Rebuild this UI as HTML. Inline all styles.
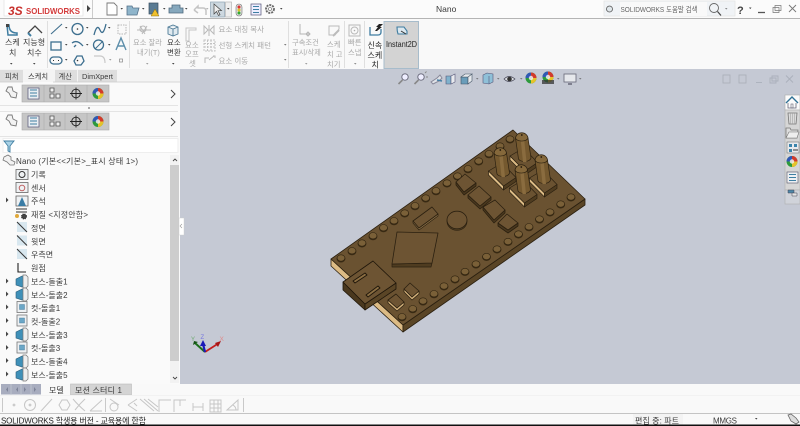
<!DOCTYPE html>
<html><head><meta charset="utf-8"><title>Nano</title>
<style>
html,body{margin:0;padding:0;width:800px;height:426px;overflow:hidden;background:#f9f9f9}
svg{display:block;position:absolute;left:0;top:0;filter:blur(.35px)}
text{font-family:"Liberation Sans","Noto Sans CJK KR",sans-serif;font-size:8px;fill:#3a3a3a}
.g text,text.g{fill:#a9a9a9}
.d{fill:none;stroke:#b9b9b9;stroke-width:1}
.b{fill:none;stroke:#3d6f8f;stroke-width:1.3}
.i{fill:none;stroke:#4a6a80;stroke-width:1}
</style></head><body>
<svg width="800" height="426" viewBox="0 0 800 426" xmlns="http://www.w3.org/2000/svg">
<defs>
<g id="pad"><ellipse cx="0" cy="0.8" rx="4.4" ry="3.7" fill="#3a2b14"/><ellipse cx="0" cy="0" rx="3.9" ry="3.2" fill="#7a6038" stroke="#2f2310" stroke-width=".6"/></g>
<g id="sw">
<path d="M-13.500,-4 L1.500,11 L1.500,15 L-13.500,0 Z" fill="#dcbb85" stroke="#2b2010" stroke-width=".7"/>
<path d="M1.500,11 L14,2.500 L14,6.500 L1.500,15 Z" fill="#4f3c20" stroke="#2b2010" stroke-width=".7"/>
<path d="M-13.500,-4 L0,-12 L14,2.500 L1.500,11 Z" fill="#6a5231" stroke="#2b2010" stroke-width=".7"/>
<path d="M-8,-22 L-5,-1 A6.500,4 0 0 0 7.500,-2 L4.500,-22 Z" fill="#75592f" stroke="#2b2010" stroke-width=".7"/>
<path d="M-3,-22 L-.5,2 L3,2 L.5,-22 Z" fill="#8a6c3f"/>
<path d="M-8,-22 A6.300,6 0 0 1 4.500,-22 A6.300,3.500 0 0 1 -8,-22 Z" fill="#85683b" stroke="#2b2010" stroke-width=".7"/>
<circle cx="-1.700" cy="-25" r=".9" fill="#1f160a"/>
</g>
<g id="ref"><rect x="-6" y="-5" width="12" height="10" fill="#eef1f3" stroke="#666" stroke-width=".8"/></g>
<g id="boss"><path d="M-6,-2 L0,-5 L3,-5 L3,5 L0,6 L-6,4 Z" fill="#3f90b8" stroke="#2c5d78" stroke-width=".6"/><path d="M1,-6 h3 l2,2 v9 l-2,2 h-3 Z" fill="#eeeeee" stroke="#777" stroke-width=".7"/></g>
<g id="cut"><rect x="-5" y="-6" width="10" height="11" fill="#eef1f3" stroke="#777" stroke-width=".8"/><rect x="-2.500" y="-3" width="5" height="5" fill="#6ba7c7" stroke="#3d6f8f" stroke-width=".4"/></g>
<g id="pl"><rect x="-5" y="-5" width="10" height="10" fill="#c9deea" opacity=".7"/><path d="M-5,-5 L5,5" stroke="#333" stroke-width="1"/></g>
<path id="ar" d="M0,-2.500 L2.500,0 L0,2.500 Z" fill="#444"/>
<path id="dt" d="M0,0 h2.500 L1.250,1.600 Z" fill="#444"/>
<g id="ball"><circle r="5.500" fill="#2d9a3c"/><path d="M-5.500,0 A5.500,5.500 0 0 1 0,-5.500 L0,0 Z" fill="#3158b5"/><path d="M0,-5.500 A5.500,5.500 0 0 1 5.500,0 L0,0 Z" fill="#d33a2c"/><path d="M5.500,0 A5.500,5.500 0 0 1 0,5.500 L0,0 Z" fill="#e5c32a"/><circle r="2.200" fill="#eee" opacity=".85"/></g>
<g id="iconrow">
<rect x="22" y="0" width="87" height="17" fill="#c6c6c6" stroke="#aaa" stroke-width=".6"/>
<path d="M44,0 V17 M65,0 V17 M87,0 V17" stroke="#aeaeae" stroke-width=".7"/>
<path d="M8,2 L12,2 L13,6 L17,8 L16,13 L11,12 L9,8 L6,6 Z" fill="#f2f2f2" stroke="#777" stroke-width=".9"/>
<rect x="28" y="3" width="11" height="11" fill="#e9eef2" stroke="#557" stroke-width=".7"/>
<path d="M30,5 H37 M30,8 H37 M30,11 H37" stroke="#3e7fa3" stroke-width="1"/>
<path d="M50,3 h4 v4 h-4 Z M56,9 h4 v4 h-4 Z M50,9 h4 v4 h-4 Z" fill="#eee" stroke="#555" stroke-width=".8"/>
<circle cx="76" cy="8.500" r="4.300" fill="none" stroke="#222" stroke-width=".9"/><path d="M70,8.500 H82 M76,2.500 V14.500" stroke="#222" stroke-width=".9"/>
<use href="#ball" x="98" y="8.500"/>
<path d="M171,5 L175,9 L171,13" fill="none" stroke="#444" stroke-width="1"/>
</g>
</defs>

<rect width="800" height="426" fill="#f9f9f9"/>
<!-- top bar -->
<rect x="0" y="0" width="800" height="18" fill="#fbfbfb"/>
<rect x="0" y="18" width="800" height="1" fill="#b4b4b4"/>
<rect x="4" y="-1" width="79" height="17" fill="#fff" stroke="#ddd" stroke-width=".6"/>
<text x="26" y="14" textLength="54" lengthAdjust="spacingAndGlyphs" style="font-size:8.500px;font-weight:700;fill:#d33b3b">SOLIDWORKS</text>
<text x="8" y="15" style="font-size:12px;font-weight:700;font-style:italic;fill:#c8322e">3S</text>
<path d="M87,5 L90.500,8.500 L87,12 Z" fill="#444"/>
<path d="M92.500,0 V18" stroke="#ccc"/>
<!-- quick bar -->
<path d="M107,3 h7 l3,3 v9 h-10 Z" fill="#fff" stroke="#777" stroke-width=".9"/><use href="#dt" x="120.500" y="8"/>
<path d="M127,6 h5 l1,2 h6 l-2,7 h-10 Z" fill="#8fb5cb" stroke="#55718a" stroke-width=".8"/><use href="#dt" x="142" y="8"/>
<rect x="149" y="3" width="9" height="11" fill="#5a7b93" stroke="#3a4f60" stroke-width=".7"/><path d="M155,9 l4,7 h-8 Z" fill="#f0c02c" stroke="#8a6f10" stroke-width=".5"/><use href="#dt" x="163" y="8"/>
<path d="M172,5 h8 v3 h3 v5 h-14 v-5 h3 Z" fill="#86a8bd" stroke="#4f6a7e" stroke-width=".8"/><use href="#dt" x="185" y="8"/>
<path d="M194,10 l4,-4 v2 h5 q3,0 3,3 v4 M194,10 l4,3" fill="none" stroke="#c4c4c4" stroke-width="1.500"/><use href="#dt" x="206" y="8" opacity=".4"/>
<rect x="210.500" y="2" width="14" height="15" fill="#cdd8e0" stroke="#8fa4b4" stroke-width=".7"/>
<path d="M214,4 v10 l2.500,-2.500 l2,4 l1.500,-.8 l-2,-4 h3.500 Z" fill="#eee" stroke="#444" stroke-width=".7"/>
<rect x="225.500" y="2" width="6" height="15" fill="#eee" stroke="#aaa" stroke-width=".6"/><use href="#dt" x="227" y="8"/>
<rect x="236" y="4" width="6" height="12" rx="3" fill="#ddd" stroke="#777" stroke-width=".6"/><circle cx="239" cy="7" r="1.500" fill="#d33"/><circle cx="239" cy="10" r="1.500" fill="#d9c22a"/><circle cx="239" cy="13" r="1.500" fill="#3a3"/>
<rect x="251" y="4" width="10" height="11" fill="#eef" stroke="#557" stroke-width=".7"/><path d="M253,6.500 h6 M253,9.500 h6 M253,12.500 h6" stroke="#3e7fa3"/>
<circle cx="270" cy="9" r="4" fill="#eee" stroke="#666" stroke-width="1.800" stroke-dasharray="2 1"/><circle cx="270" cy="9" r="1.500" fill="#fff" stroke="#666" stroke-width=".6"/><use href="#dt" x="280" y="8"/>
<text x="436" y="12" style="font-size:8.500px">Nano</text>
<!-- search -->
<rect x="604" y="1" width="131" height="15" fill="#f0f3f6" stroke="#e3e3e3" stroke-width=".7"/>
<rect x="620" y="2" width="87" height="14" fill="#f9f9f9"/>
<circle cx="609.500" cy="9" r="3" fill="#dfe6ea" stroke="#555" stroke-width=".8"/>
<text x="620.500" y="12" textLength="77" lengthAdjust="spacingAndGlyphs" style="font-size:7.500px;fill:#666">SOLIDWORKS 도움말 검색</text>
<circle cx="714" cy="8" r="4.500" fill="none" stroke="#666" stroke-width=".9"/><path d="M717.500,11.500 L721,15.500" stroke="#444" stroke-width="1.200"/><use href="#dt" x="725" y="8" opacity=".6"/>
<text x="737" y="14" style="font-size:11px;font-weight:700;fill:#444">?</text><use href="#dt" x="749" y="7.500"/>
<path d="M758,12.500 h7" stroke="#555" stroke-width="1.300"/>
<path d="M775,5.500 h6 v5 h-6 Z M773,7.500 h6 v5 h-6 Z" fill="#f9f9f9" stroke="#777" stroke-width=".7"/>
<path d="M789,5 l7,7 M796,5 l-7,7" stroke="#777" stroke-width=".9"/>

<!-- ribbon -->
<rect x="0" y="19" width="800" height="50" fill="#f9f9f9"/>
<path d="M47.500,21 V68 M129.500,21 V68 M288.500,21 V68 M344.500,21 V68 M364.500,21 V68" stroke="#dfdfdf"/>
<path d="M7,25 h2 q0,8 8,8 v2 h-9 Z" fill="none" stroke="#3f7da1" stroke-width="1.500"/><rect x="6" y="24" width="3" height="3" fill="#444"/>
<text x="5" y="45">스케</text><text x="9" y="55.500">치</text><use href="#dt" x="10" y="63"/>
<path d="M28,33 l7,-7 l7,7" fill="none" stroke="#444" stroke-width="1.300"/><path d="M28,33 l3,3" stroke="#3f7da1" stroke-width="2"/>
<text x="23" y="45">지능형</text><text x="27" y="55.500">치수</text><use href="#dt" x="33" y="63"/>
<!-- sketch tools -->
<path d="M51,34 L62,24" stroke="#3f6f8e" stroke-width="1.100"/><use href="#dt" x="65" y="27"/>
<rect x="51" y="42" width="10" height="8" class="b"/><use href="#dt" x="65" y="44"/>
<rect x="50" y="57" width="12" height="7" rx="3.500" class="b"/><path d="M53,60.500h1M58,60.500h1" stroke="#333"/><use href="#dt" x="65" y="59"/>
<circle cx="77.500" cy="29" r="5.500" class="b"/><circle cx="77.500" cy="29" r=".8" fill="#333"/><use href="#dt" x="86" y="27"/>
<path d="M72,43 q5,-4 11,3 M74,47 l2,-2" class="b"/><use href="#dt" x="86" y="44"/>
<path d="M74,61 l3,-5 h5 l2,5 l-3,4 h-5 Z" class="b"/><circle cx="77.500" cy="60.500" r=".8" fill="#333"/>
<path d="M94,35 q3,-12 6,-5 t6,-6" class="b"/><use href="#dt" x="108" y="27"/>
<circle cx="98.500" cy="45" r="5" class="b"/><path d="M95,49 L103,41" stroke="#3d6f8f"/><use href="#dt" x="108" y="44"/>
<path d="M94,56 h6 q5,0 5,7" fill="none" stroke="#c9c9c9" stroke-width="1.200"/><use href="#dt" x="109" y="59" opacity=".5"/>
<rect x="118" y="25" width="8" height="9" fill="none" stroke="#b6b6b6" stroke-dasharray="1.500 1"/>
<path d="M116,50 l5,-12 l5,12 M118,46 h6" fill="none" stroke="#5e8fab" stroke-width="1.400"/>
<rect x="119.500" y="59" width="3" height="3" fill="none" stroke="#888" stroke-width=".7"/>
<!-- group 2 -->
<path d="M140,26 l5,8 M147,26 l-5,8 M137,30 h14" class="d" stroke-width="1.300"/><circle cx="143" cy="29" r="3" class="d"/>
<g class="g"><text x="133" y="45" style="font-size:7.300px">요소 잘라</text><text x="137" y="55" style="font-size:7.300px">내기(T)</text></g>
<use href="#dt" x="146" y="63" opacity=".5"/>
<path d="M168,27 l5,-2 l5,2 v7 l-5,2 l-5,-2 Z M173,29 v7 M168,27 l5,2 l5,-2" fill="#dfe9ef" stroke="#4d7a96" stroke-width=".9"/>
<text x="167" y="45" style="font-size:7.500px">요소</text><text x="167" y="55" style="font-size:7.500px">변환</text><use href="#dt" x="172" y="63"/>
<path d="M186,28 h10 v2 h-7 v11 h-3 Z" fill="none" stroke="#c5c5c5"/>
<g class="g"><text x="185" y="47.500" style="font-size:7.500px">요소</text><text x="185" y="56.500" style="font-size:7.500px">오프</text><text x="189" y="66" style="font-size:7.500px">셋</text></g>
<path d="M204,26 l4,4 l-4,4 Z M214,26 l-4,4 l4,4 Z M209,25 v11" class="d"/>
<path d="M204,40 h11 v11 h-11 Z M204,43.500 h11 M204,47 h11 M207.500,40 v11 M211,40 v11" fill="none" stroke="#c2c2c2" stroke-dasharray="2 1"/>
<path d="M205,63 v-5 h4 M209,60 l5,-4 M213,56 h2 v2" class="d"/>
<g class="g"><text x="218.500" y="32" style="font-size:7.500px">요소 대칭 복사</text><text x="218.500" y="48" style="font-size:7.500px">선형 스케치 패턴</text><text x="218.500" y="63.500" style="font-size:7.500px">요소 이동</text></g>
<use href="#dt" x="284" y="44" opacity=".7"/><use href="#dt" x="284" y="59" opacity=".7"/>
<!-- group 3 -->
<path d="M300,24 V34 H310 M306,34 l2,-2 l2,2 l-2,2 Z" fill="none" stroke="#b5b5b5"/>
<g class="g"><text x="292" y="45" style="font-size:7.300px">구속조건</text><text x="292" y="55" style="font-size:7.300px">표시/삭제</text></g><use href="#dt" x="305" y="63" opacity=".5"/>
<path d="M329,26 h10 v3 l-4,6 h-6 Z" fill="none" stroke="#bbb"/><path d="M333,36 l6,-6" stroke="#bbb" stroke-width="2"/>
<g class="g"><text x="327" y="47" style="font-size:7.300px">스케</text><text x="327" y="57" style="font-size:7.300px">치 고</text><text x="327" y="67" style="font-size:7.300px">치기</text></g>
<rect x="349" y="25" width="11" height="11" class="d"/><circle cx="354.500" cy="30.500" r="3.500" class="d"/><circle cx="354.500" cy="30.500" r=".8" fill="#aaa"/>
<g class="g"><text x="348" y="45" style="font-size:7.300px">빠른</text><text x="348" y="55" style="font-size:7.300px">스냅</text></g><use href="#dt" x="354" y="63" opacity=".6"/>
<!-- rapid sketch -->
<path d="M370,27 v8 h8 q3,0 3,-3 v-3" fill="none" stroke="#3f7da1" stroke-width="1.300"/><path d="M375,31 l3,-4 h-2 l3,-3 h4 l-3,3 h2 l-5,4 Z" fill="#222"/>
<text x="367.500" y="48" style="fill:#222">신속</text><text x="367.500" y="58" style="fill:#222">스케</text><text x="371.500" y="67.500" style="fill:#222">치</text>
<rect x="384" y="21.500" width="34.500" height="47" fill="#d3d3d3" stroke="#a7bccb"/>
<path d="M397,27 h7 l3,4 v3 h-9 q-1,-3 -1,-7 Z" fill="#dce8ef" stroke="#3f7da1" stroke-width="1.100"/><path d="M401,31 l5,3" stroke="#333"/>
<text x="386" y="47" textLength="31" lengthAdjust="spacingAndGlyphs" style="font-size:7.800px;fill:#222">Instant2D</text>

<!-- viewport -->
<rect x="180" y="69" width="620" height="315" fill="#c5c9d4"/>
<!-- heads up toolbar -->
<g fill="none" stroke="#667" stroke-width=".9">
<circle cx="405" cy="77" r="3.200" fill="#eef"/><path d="M402.500,80 l-4,4" stroke="#888" stroke-width="1.600"/>
<circle cx="421" cy="77" r="3.200" fill="#eef"/><path d="M418.500,80 l-4,4" stroke="#888" stroke-width="1.600"/><path d="M425,73 l1.500,-1.500 M426,77 h2" stroke="#888"/>
</g>
<path d="M431,82 l6,-4 l3,-3 l2,3 l-3,3 l-6,3 Z" fill="#dfe3e8" stroke="#889"/><path d="M437,80 l5,1" stroke="#467fa5" stroke-width="1.500"/>
<path d="M446,76 h5 v8 h-5 Z" fill="#7fb2cd" stroke="#557" stroke-width=".6"/><path d="M451,76 l4,-2 v8 l-4,2 Z" fill="#e8eaee" stroke="#557" stroke-width=".6"/>
<path d="M461,77 h7 v7 h-7 Z" fill="#6a9dba" stroke="#456" stroke-width=".6"/><path d="M461,77 l4,-3 h7 l-4,3 Z M468,77 l4,-3 v7 l-4,3 Z" fill="#e6e9ec" stroke="#456" stroke-width=".6"/><use href="#dt" x="476" y="78" opacity=".6"/>
<path d="M483,75 l4,-2 l6,1 v8 l-4,2 l-6,-1 Z" fill="#8fc0d8" stroke="#557" stroke-width=".6"/><path d="M489,76 v8" stroke="#557" stroke-width=".6"/><use href="#dt" x="497" y="78" opacity=".6"/>
<path d="M504,79 q5,-5 11,0 q-6,5 -11,0 Z" fill="#dadde2" stroke="#445" stroke-width=".7"/><circle cx="509.500" cy="79" r="2.300" fill="#333"/><use href="#dt" x="520" y="78" opacity=".6"/>
<use href="#ball" x="531" y="78"/><use href="#ball" x="548" y="77"/>
<path d="M542,80 h12 v4 h-12 Z" fill="#333" opacity=".75"/><use href="#dt" x="557" y="78" opacity=".6"/>
<rect x="564" y="74" width="12" height="8" fill="#e6e8ec" stroke="#667" stroke-width=".8"/><path d="M568,84 h4" stroke="#667" stroke-width="1.500"/><use href="#dt" x="579" y="78" opacity=".6"/>
<!-- viewport window controls -->
<g fill="none" stroke="#abb0bb" stroke-width=".9">
<rect x="723" y="75" width="7" height="8"/><rect x="739" y="75" width="7" height="8"/>
<path d="M756,82.500 h6"/><path d="M772,76 h6 v5 h-6 Z M770,78 h6 v5 h-6 Z"/><path d="M786,75.500 l7,7 M793,75.500 l-7,7"/>
</g>
<!-- right tabs -->
<rect x="785" y="95" width="15" height="15" fill="#fbfbfb" stroke="#aaa" stroke-width=".6"/>
<rect x="785" y="110" width="15" height="80" fill="#d6d6d6" stroke="#b0b0b0" stroke-width=".6"/>
<rect x="785" y="190" width="15" height="14" fill="#d0d3da" stroke="#b0b0b0" stroke-width=".6"/>
<path d="M786,103 l6,-6 l6,6" fill="none" stroke="#2f7195" stroke-width="1.400"/><path d="M788,103 v5 h8 v-5" fill="none" stroke="#667" stroke-width=".8"/><rect x="791" y="104" width="2" height="4" fill="none" stroke="#667" stroke-width=".6"/>
<path d="M788,113 h9 l-1,11 h-7 Z" fill="#dcdcdc" stroke="#777" stroke-width=".8"/><path d="M790.500,113 v11 M792.500,113 v11 M794.500,113 v11" stroke="#999" stroke-width=".5"/>
<path d="M786,128 h4 l1,2 h7 l-1,8 h-11 Z" fill="#ddd" stroke="#777" stroke-width=".8"/><path d="M789,132 h10 l-2,6 h-11 Z" fill="#eee" stroke="#777" stroke-width=".6"/>
<rect x="787" y="142" width="12" height="11" fill="#e8eaee" stroke="#777" stroke-width=".6"/><path d="M789,144 h3 v3 h-3 Z M794,144 h3 v3 h-3 Z M789,149 h3 v3 h-3 Z" fill="#3b84ab"/><path d="M793,150 h5" stroke="#333"/>
<use href="#ball" x="792" y="161.500"/>
<rect x="787" y="172" width="11" height="11" fill="#eef0f3" stroke="#667" stroke-width=".7"/><path d="M789,174.500 h7 M789,177.500 h7 M789,180.500 h7" stroke="#3e7fa3"/>
<path d="M788,190 h6 v3 h-6 Z" fill="#4d86a8" stroke="#445" stroke-width=".5"/><path d="M792,193 h5 v3 h-5 Z" fill="#e5e5e5" stroke="#445" stroke-width=".5"/>

<!-- MODEL -->
<g stroke-linejoin="round">
<path d="M331,259 L403,325 L403,332 L331,266 Z" fill="#dcbb85" stroke="#2b2010" stroke-width=".8"/>
<path d="M403,325 L585,199 L585,205 L403,332 Z" fill="#5a4526" stroke="#2b2010" stroke-width=".8"/>
<path d="M513,130 L585,199 L403,325 L331,259 Z" fill="#6a5231" stroke="#2b2010" stroke-width=".8"/>
<!-- pads top edge -->
<use href="#pad" x="341" y="258"/><use href="#pad" x="352" y="250.700"/><use href="#pad" x="362" y="243"/><use href="#pad" x="373" y="235.700"/><use href="#pad" x="383.500" y="227.700"/><use href="#pad" x="394" y="220.700"/><use href="#pad" x="404.700" y="213"/><use href="#pad" x="415" y="205.700"/><use href="#pad" x="425.700" y="198"/><use href="#pad" x="436" y="190.700"/><use href="#pad" x="447" y="183"/><use href="#pad" x="457.500" y="176"/><use href="#pad" x="468" y="168.700"/><use href="#pad" x="478.700" y="161"/><use href="#pad" x="489" y="153.700"/><use href="#pad" x="500" y="146"/><use href="#pad" x="510" y="139"/>
<!-- pads bottom edge -->
<use href="#pad" x="402" y="316.700"/><use href="#pad" x="412.700" y="308.700"/><use href="#pad" x="423" y="301"/><use href="#pad" x="434" y="293.700"/><use href="#pad" x="444" y="286"/><use href="#pad" x="455" y="279"/><use href="#pad" x="465" y="271.500"/><use href="#pad" x="476" y="264"/><use href="#pad" x="486.500" y="256.500"/><use href="#pad" x="497" y="249"/><use href="#pad" x="508" y="241.500"/><use href="#pad" x="518.500" y="234"/><use href="#pad" x="529" y="226.700"/><use href="#pad" x="539.500" y="219"/><use href="#pad" x="550" y="212"/><use href="#pad" x="560.700" y="204"/><use href="#pad" x="571" y="197"/>
<!-- big chip -->
<path d="M392,264 L432,263 L431,267 L392,267 Z" fill="#4f3c20" stroke="#2b2010" stroke-width=".7"/>
<path d="M397,232 L438,233 L432,263 L392,264 Z" fill="#6d5433" stroke="#2b2010" stroke-width=".8"/>
<!-- circle -->
<ellipse cx="457" cy="221.500" rx="10" ry="8.800" fill="#4f3c20" stroke="#2b2010" stroke-width=".6"/>
<ellipse cx="457" cy="220" rx="10" ry="8.800" fill="#6d5433" stroke="#2b2010" stroke-width=".8"/>
<!-- rect chip -->
<path d="M413,221 L419,228 L438,214 L438,216 L419,230 L413,223 Z" fill="#8d7147" stroke="#2b2010" stroke-width=".7"/>
<path d="M413,221 L432,207 L438,214 L419,228 Z" fill="#6d5433" stroke="#2b2010" stroke-width=".8"/>
<!-- squares -->
<g stroke="#2b2010" stroke-width=".8">
<path d="M456,182 L464,192 L476,183 L476,186 L464,195 L456,185 Z" fill="#4a381e"/><path d="M456,182 L465,174 L476,183 L464,192 Z" fill="#6d5433"/>
<path d="M468,195 L480,206 L491,197 L491,200 L480,209 L468,198 Z" fill="#4a381e"/><path d="M468,195 L479,186 L491,197 L480,206 Z" fill="#6d5433"/>
<path d="M483,207 L494,220 L505,210 L505,213 L494,223 L483,210 Z" fill="#4a381e"/><path d="M483,207 L495,200 L505,210 L494,220 Z" fill="#6d5433"/>
<path d="M498,223 L508,230 L518,223 L518,226 L508,233 L498,226 Z" fill="#4a381e"/><path d="M498,223 L507,214 L518,223 L508,230 Z" fill="#6d5433"/>
<path d="M404,289 L412,297 L419,291 L419,294 L412,300 L404,292 Z" fill="#d2b07a"/><path d="M404,289 L410,283 L419,291 L412,297 Z" fill="#6d5433"/>
<path d="M388,300 L397,308 L404,302 L404,305 L397,311 L388,303 Z" fill="#d2b07a"/><path d="M388,300 L396,294 L404,302 L397,308 Z" fill="#6d5433"/>
</g>
<!-- USB -->
<path d="M343,282 L365,304 L365,310 L343,290 Z" fill="#4a381e" stroke="#1f160a" stroke-width=".8"/>
<path d="M365,304 L396,283 L396,289 L365,310 Z" fill="#5a4526" stroke="#1f160a" stroke-width=".8"/>
<path d="M343,282 L373,261 L396,283 L365,304 Z" fill="#6d5433" stroke="#1f160a" stroke-width=".8"/>
<path d="M353,281 L365,273 L367,275 L355,283 Z" fill="#8b6e42" stroke="#1f160a" stroke-width=".9"/>
<path d="M366,295 L378,286 L380,288 L368,297 Z" fill="#8b6e42" stroke="#1f160a" stroke-width=".9"/>
<!-- switches -->
<use href="#sw" x="523.500" y="160"/>
<use href="#sw" x="502" y="175"/>
<use href="#sw" x="543" y="182"/>
<use href="#sw" x="523" y="192"/>
</g>
<!-- triad -->
<path d="M205,352 L219,343" stroke="#c31d1d" stroke-width="1.800"/><path d="M215,343 L221,341 L218,347 Z" fill="#a81515"/>
<path d="M205,352 L195,343" stroke="#1c6f1c" stroke-width="2"/><path d="M193,345 L194,341 L198,342 Z" fill="#125212"/>
<path d="M205,352 L203,344" stroke="#1a1ab8" stroke-width="2.200"/><path d="M200,346 L203,340 L206,346 Z" fill="#1a1ab8"/>
<text x="219.500" y="341" style="font-size:6.500px;fill:#e08a8a">X</text><text x="191" y="341" style="font-size:6px;fill:#6eaa70">Y</text><text x="200.500" y="339" style="font-size:6px;fill:#7878e0">Z</text>

<!-- left panel -->
<rect x="0" y="69" width="180" height="315" fill="#fafafa"/>
<rect x="0" y="69" width="180" height="13" fill="#f4f4f4"/>
<rect x="0" y="70" width="23" height="12" fill="#dedede"/>
<rect x="55" y="70" width="22" height="12" fill="#dedede"/>
<rect x="78" y="70" width="39" height="12" fill="#dedede"/>
<path d="M0,82 H23 M53,82 H180" stroke="#ccc" stroke-width=".7"/>
<text x="5" y="79" style="font-size:7.300px">피처</text>
<text x="28" y="79" style="font-size:7.300px">스케치</text>
<text x="58.500" y="79" style="font-size:7.300px">계산</text>
<text x="82" y="79" textLength="31" lengthAdjust="spacingAndGlyphs" style="font-size:7.500px">DimXpert</text>
<use href="#iconrow" y="85"/>
<rect x="0" y="105" width="178" height="1" fill="#e4e4e4"/><rect x="88" y="107" width="2" height="2" fill="#aaa"/><rect x="0" y="111" width="178" height="1" fill="#e4e4e4"/>
<use href="#iconrow" y="113"/>
<rect x="0" y="136" width="178" height="1" fill="#e4e4e4"/>
<rect x="3" y="138.500" width="175" height="14" fill="#fff" stroke="#eee"/>
<path d="M4,141 h10 l-4,5 v6 l-2,-1 v-5 Z" fill="#a9d2e6" stroke="#3f7da1" stroke-width=".9"/>
<!-- scrollbar -->
<rect x="170" y="155" width="9" height="228" fill="#f2f2f2"/>
<rect x="170" y="165" width="9" height="196" fill="#cdcdcd"/>
<path d="M173,161 l2,-2 l2,2" fill="none" stroke="#444" stroke-width=".9"/><path d="M173,377 l2,2 l2,-2" fill="none" stroke="#444" stroke-width=".9"/>
<!-- splitter -->
<rect x="179" y="218" width="5" height="17" fill="#fff" stroke="#ccc" stroke-width=".4"/><path d="M182,224 l-2,2 l2,2" fill="none" stroke="#999" stroke-width=".6"/>
<!-- tree -->
<path d="M4,157 L8,155 L11,157 L11,160 L15,162 L14,165 L10,165 L7,162 L3,160 Z" fill="#f2f2f2" stroke="#777" stroke-width=".8"/>
<text x="16" y="164" textLength="122" style="font-size:8px">Nano  (기본&lt;&lt;기본&gt;_표시 상태 1&gt;)</text>
<use href="#ref" x="22" y="174.500"/><circle cx="22" cy="174.500" r="3" fill="none" stroke="#333"/>
<text x="31" y="177.500">기록</text>
<use href="#ref" x="22" y="187.500"/><circle cx="22" cy="188" r="2.800" fill="none" stroke="#b55" stroke-width=".9"/>
<text x="31" y="190.800">센서</text>
<use href="#ar" x="6" y="200"/>
<use href="#ref" x="22" y="201"/><path d="M18,206 l4,-9 l4,9 Z" fill="#3a7ca5"/>
<text x="31" y="204">주석</text>
<path d="M16,209 h11 M16,212 h11" stroke="#333"/><circle cx="17" cy="216" r="2" fill="#e0a83a"/><circle cx="24" cy="216.500" r="2.500" fill="#444" stroke="#222" stroke-dasharray="1 1"/>
<text x="31" y="217.500" textLength="57">재질 &lt;지정안함&gt;</text>
<use href="#pl" x="22" y="227"/><text x="31" y="231">정면</text>
<use href="#pl" x="22" y="240.500"/><text x="31" y="244.500">윗면</text>
<use href="#pl" x="22" y="254"/><text x="31" y="257.500">우측면</text>
<path d="M18,263 V272 H26" fill="none" stroke="#222" stroke-width="1.100"/>
<text x="31" y="271">원점</text>
<use href="#ar" x="6" y="281"/><use href="#boss" x="22" y="281"/><text x="31" y="284.500">보스-돌출1</text>
<use href="#ar" x="6" y="294"/><use href="#boss" x="22" y="294"/><text x="31" y="298">보스-돌출2</text>
<use href="#ar" x="6" y="307"/><use href="#cut" x="22" y="307.500"/><text x="31" y="311">컷-돌출1</text>
<use href="#ar" x="6" y="320.500"/><use href="#cut" x="22" y="321"/><text x="31" y="324.500">컷-돌출2</text>
<use href="#ar" x="6" y="334"/><use href="#boss" x="22" y="334"/><text x="31" y="338">보스-돌출3</text>
<use href="#ar" x="6" y="347.500"/><use href="#cut" x="22" y="348"/><text x="31" y="351">컷-돌출3</text>
<use href="#ar" x="6" y="360.500"/><use href="#boss" x="22" y="361"/><text x="31" y="364.500">보스-돌출4</text>
<use href="#ar" x="6" y="374"/><use href="#boss" x="22" y="374"/><text x="31" y="378">보스-돌출5</text>

<!-- bottom area -->
<rect x="0" y="384" width="800" height="40" fill="#f9f9f9"/>
<rect x="1" y="384" width="40" height="10.500" fill="#a8adbf"/>
<path d="M11,384 V395 M21,384 V395 M31,384 V395" stroke="#c7cad4" stroke-width=".7"/>
<path d="M8,387 l-2,2.500 l2,2.500 Z M18,387 l-2,2.500 l2,2.500 Z M24,387 l2,2.500 l-2,2.500 Z M34,387 l2,2.500 l-2,2.500 Z" fill="#7d8398"/>
<text x="49" y="393">모델</text>
<rect x="70.500" y="384" width="61" height="11" fill="#d4d4d4" stroke="#bbb" stroke-width=".6"/>
<text x="75" y="393" textLength="47">모션 스터디 1</text>
<rect x="0" y="395" width="800" height="1" fill="#f2f2f2"/>
<!-- sketch toolbar -->
<g fill="none" stroke="#c6c6c6" stroke-width="1">
<path d="M2.500,398 V412 M105.500,398 V412 M243.500,398 V412" stroke="#c9c9c9"/>
<circle cx="14" cy="405" r=".9"/><circle cx="30" cy="405" r="5.500"/><circle cx="30" cy="405" r=".9"/>
<path d="M41,411 L52,399"/><path d="M59,405 l3,-5 h5 l3,5 l-3,5 h-5 Z"/>
<path d="M73,399 q5,6 12,12 M85,399 q-5,5 -5,5 l-5,6"/><path d="M90,411 L102,400 M90,411 h12"/>
<circle cx="114" cy="407" r="4"/><path d="M110,399 l9,6"/><path d="M128,405 l9,-6 M128,405 l9,6 M134,403 l3,3"/>
<path d="M140,399 l14,12 M144,399 l14,12 M148,399 l10,8"/>
<path d="M159,412 V400 H171"/><path d="M174,412 V400 H186 M180,400 V406"/>
<path d="M193,403 V411 M203,403 V411 M193,407 H203"/>
<path d="M210,400 H221 V412 H210 Z M210,404 H221 M210,408 H221 M214,400 V412 M218,400 V412"/>
<path d="M227,410 L238,400 V410 Z M233,405 q3,2 3,5"/>
</g>
<rect x="0" y="413" width="800" height="1" fill="#c4c4c4"/>
<!-- status -->
<rect x="0" y="414" width="800" height="10.500" fill="#f9f9f9"/>
<text x="1" y="423.500" textLength="145" style="fill:#222">SOLIDWORKS 학생용 버전 - 교육용에 한함</text>
<rect x="633" y="414" width="50" height="10.500" fill="#f3f3f3"/>
<text x="635" y="423.500" textLength="44">편집 중: 파트</text>
<text x="713" y="423.500" textLength="24">MMGS</text>
<use href="#dt" x="755" y="418"/>
<path d="M788,415 l3,-1 l5,4 l3,4 l-3,2 l-5,-3 Z" fill="#ddd" stroke="#666" stroke-width=".8"/>
<rect x="0" y="424.500" width="800" height="1.500" fill="#111"/>
</svg>
</body></html>
